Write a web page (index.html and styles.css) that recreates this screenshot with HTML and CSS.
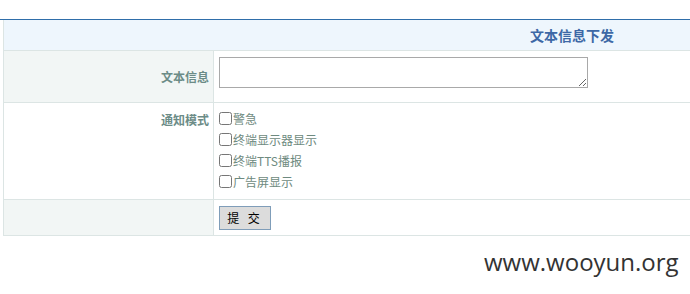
FILE: index.html
```html
<!DOCTYPE html>
<html lang="zh">
<head>
  <meta charset="UTF-8">
  <title>文本信息下发</title>
  <link rel="stylesheet" href="styles.css">
</head>
<body>

  <div class="topline"></div>

  <table class="form-table">
    <tr>
      <th class="caption" colspan="2">文本信息下发</th>
    </tr>
    <tr class="row-text">
      <td class="label">文本信息</td>
      <td class="field"><textarea class="msg"></textarea></td>
    </tr>
    <tr class="row-mode">
      <td class="label top">通知模式</td>
      <td class="field">
        <label class="opt"><input type="checkbox">警急</label>
        <label class="opt"><input type="checkbox">终端显示器显示</label>
        <label class="opt"><input type="checkbox">终端TTS播报</label>
        <label class="opt"><input type="checkbox">广告屏显示</label>
      </td>
    </tr>
    <tr class="row-submit">
      <td class="label"></td>
      <td class="field"><button class="submit">提 交</button></td>
    </tr>
  </table>

  <div class="watermark">www.wooyun.org</div>

</body>
</html>
```

FILE: styles.css
```css
body {
  margin: 0;
  padding: 19px 0 0 0;
  font-family: "Noto Sans CJK SC", "DejaVu Sans", sans-serif;
  font-size: 12px;
  background: #fff;
  overflow: hidden;
  width: 690px;
}

.topline {
  height: 1px;
  background: #2f6eaa;
}

.form-table {
  margin-left: 3px;
  width: 700px;
  border-collapse: collapse;
}

.form-table td,
.form-table th {
  border: 1px solid #dce5e4;
  padding: 0;
}

.caption {
  height: 30px;
  background: #eef6fd;
  color: #3d68a6;
  font-size: 14px;
  font-weight: bold;
  text-align: left;
  padding-left: 526px !important;
  border-top: none !important;
}

.label {
  width: 205px;
  background: #f2f6f5;
  color: #6c8c87;
  font-weight: bold;
  text-align: right;
  padding-right: 4px !important;
}

.row-mode .label {
  background: #fff;
}

.label.top {
  vertical-align: top;
  padding-top: 8px !important;
}

.field {
  padding-left: 5px !important;
}

.row-text td {
  height: 51px;
}

.row-text .field {
  vertical-align: top;
  padding-top: 6px !important;
  height: 45px;
}

.msg {
  display: block;
  width: 369px;
  height: 31px;
  margin: 0;
  box-sizing: border-box;
  border: 1px solid #a9a9a9;
  resize: both;
}

.row-mode .field {
  vertical-align: top;
  padding-top: 5px !important;
  height: 91px;
}

.opt {
  display: flex;
  align-items: center;
  height: 21px;
  color: #6e8a80;
}

.opt input {
  width: 13px;
  height: 13px;
  margin: 0 1px 0 0;
}

.row-submit td {
  height: 35px;
  background: #f2f6f5;
}

.row-submit .field {
  background: #fff;
}

.submit {
  width: 52px;
  height: 24px;
  background: #dcdcdc;
  border: 1px solid #7f9db9;
  font-family: "Noto Sans CJK SC", sans-serif;
  font-size: 12px;
  letter-spacing: 3px;
  color: #000;
  padding: 0;
}

.watermark {
  margin: 9px 0 0 484px;
  font-family: "Open Sans", sans-serif;
  font-size: 24px;
  color: #333;
}
```
